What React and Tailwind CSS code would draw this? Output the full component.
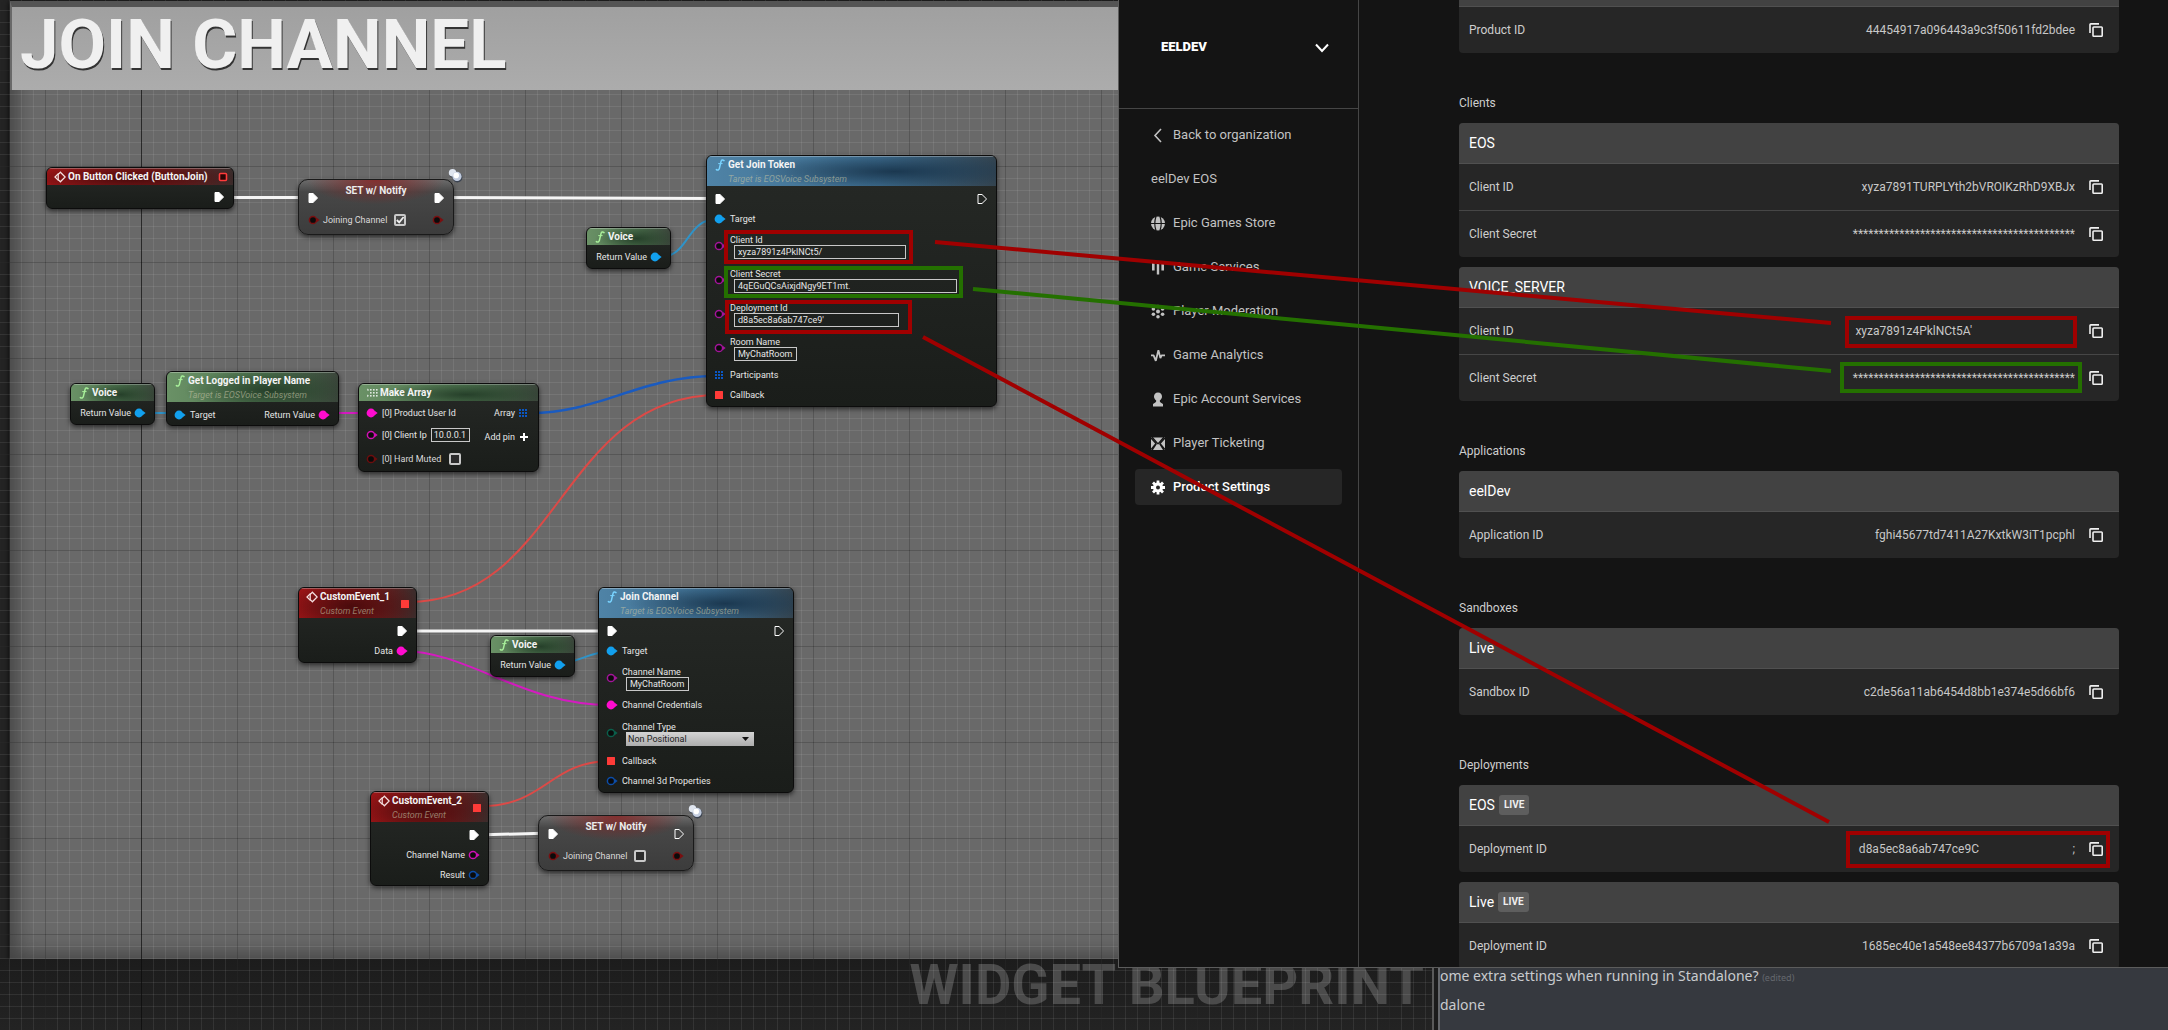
import React from "react";

/* ---------- pins and glyphs used on blueprint nodes ---------- */

function ExecPin({ hollow }) {
  return (
    <svg className="size-3 shrink-0" viewBox="0 0 12 12" aria-hidden="true">
      <path
        d="M2 1.5H6L10.6 6L6 10.5H2Z"
        fill={hollow ? "none" : "#fff"}
        stroke="#fff"
        strokeWidth="1"
        strokeLinejoin="round"
      />
    </svg>
  );
}

function DataPin({ color, hollow }) {
  return (
    <svg className="size-3 shrink-0" viewBox="0 0 12 12" aria-hidden="true">
      <path d="M9 4L11.6 6L9 8Z" fill={color} />
      {hollow ? (
        <circle cx="5" cy="6" r="3.6" fill="#0b0b0b" stroke={color} strokeWidth="1.5" />
      ) : (
        <circle cx="5" cy="6" r="4.4" fill={color} />
      )}
    </svg>
  );
}

function DelegatePin({ hollow }) {
  return (
    <svg className="size-3 shrink-0" viewBox="0 0 12 12" aria-hidden="true">
      {hollow ? (
        <rect x="2.5" y="2.5" width="7" height="7" rx="1" fill="#2a0505" stroke="#ff3b3b" strokeWidth="1.6" />
      ) : (
        <rect x="1" y="2" width="8" height="8" rx="0.5" fill="#ff3b38" />
      )}
    </svg>
  );
}

function ArrayPin() {
  return (
    <svg className="size-3 shrink-0" viewBox="0 0 12 12" aria-hidden="true" fill="#0b57c4">
      {[1, 4, 7].map((y) => [1, 4, 7].map((x) => <rect key={`${x}-${y}`} x={x} y={y + 1} width="2" height="2" />))}
    </svg>
  );
}

function FunctionIcon({ color }) {
  return (
    <svg className="h-3 w-3 shrink-0" viewBox="0 0 12 12" fill="none" stroke={color} strokeLinecap="round" aria-hidden="true">
      <path d="M10 1.6C8.6 .4 7.4 1 7 2.6L5.4 9.4C5 11 3.6 11.6 2.4 10.6" strokeWidth="1.5" />
      <path d="M4.6 4.6H8.2" strokeWidth="1" />
    </svg>
  );
}

function EventIcon() {
  return (
    <svg className="h-3 w-3 shrink-0" viewBox="0 0 12 12" fill="none" stroke="#f3dede" strokeWidth="1.3" aria-hidden="true">
      <path d="M4.6 2.4L1 6L4.6 9.6" />
      <path d="M6.4 1.2L11.2 6L6.4 10.8L4.2 8.6V3.4Z" />
    </svg>
  );
}

function MakeArrayIcon() {
  return (
    <svg className="h-3 w-3 shrink-0" viewBox="0 0 12 12" fill="#dfe8df" aria-hidden="true">
      <path d="M1 1.5L3.4 3L1.6 4ZM1 7.5L3 8.8L1.4 10.2Z" />
      {[2, 5, 8].map((y) => [4, 7, 10].map((x) => <rect key={`${x}-${y}`} x={x} y={y} width="1.6" height="1.6" />))}
    </svg>
  );
}

function NotifyIcon({ place }) {
  return (
    <svg className={`absolute h-4 w-4 ${place}`} viewBox="0 0 16 16" aria-hidden="true">
      <circle cx="6" cy="5.5" r="4" fill="#3b4350" />
      <circle cx="10.4" cy="9.4" r="5" fill="#3b4350" />
      <circle cx="5.6" cy="4.8" r="3.8" fill="#dfe5ef" />
      <circle cx="10" cy="8.4" r="4.6" fill="#c3cde0" />
      <circle cx="9.2" cy="7.4" r="2.8" fill="#fff" />
    </svg>
  );
}

/* ---------- node building blocks ---------- */

const HEADERS = {
  red: "bg-[radial-gradient(ellipse_60%_90%_at_45%_60%,#4a0b0c_0%,#4a0b0c00_100%),linear-gradient(to_right,#a01517,#7a1a1b_60%,#3a2c2b)]",
  green: "bg-[radial-gradient(ellipse_50%_80%_at_60%_60%,#26402a_0%,#26402a00_100%),linear-gradient(to_right,#6a9166,#4f7550_60%,#3b453b)]",
  blue: "bg-[radial-gradient(ellipse_50%_60%_at_65%_50%,#1b3850_0%,#1b385000_100%),linear-gradient(to_right,#4f83a6,#3d6c8e_60%,#33434f)]",
};

function Node({ place, tone, icon, title, subtitle, corner, children }) {
  return (
    <article
      className={`absolute overflow-hidden rounded-md border border-[#0c0c0c] bg-linear-to-b from-[#262926] to-[#1a1d1a] shadow-[0_2px_5px_#0009] ${place}`}
    >
      <header
        className={`flex justify-between border-t border-white/30 pr-1 pl-[7px] ${subtitle ? "h-[30px]" : "h-[17px]"} ${HEADERS[tone]}`}
      >
        <div className="flex gap-0.5 pt-[2px]">
          {icon}
          <div>
            <h3 className="text-[10px] leading-3 font-bold whitespace-nowrap text-[#f4f4f4]">{title}</h3>
            {subtitle && <p className="pt-[2px] text-[9px] leading-3 whitespace-nowrap text-[#c2c2a4] italic opacity-60">{subtitle}</p>}
          </div>
        </div>
        {corner && <div className="flex items-center">{corner}</div>}
      </header>
      <div className={subtitle ? "pt-[3px]" : "pt-[2px]"}>{children}</div>
    </article>
  );
}

function Row({ left, right, height = "h-5" }) {
  return (
    <div className={`flex items-center justify-between pr-2 pl-[7px] ${height}`}>
      <div className="flex items-center gap-1">{left}</div>
      <div className="flex items-center gap-[3px]">{right}</div>
    </div>
  );
}

function Label({ children }) {
  return <span className="text-[9px] leading-3 whitespace-nowrap text-[#e6e6e6]">{children}</span>;
}

function TextPin({ id, label, value, width }) {
  return (
    <div className="flex h-[34px] items-center gap-1 px-[7px]">
      <DataPin color="#a3149a" hollow />
      <div className="flex flex-col">
        <label htmlFor={id} className="pt-0.5 text-[9px] leading-[10px] text-[#e6e6e6]">
          {label}
        </label>
        <input
          id={id}
          type="text"
          defaultValue={value}
          className={`ml-1 h-3.5 border border-[#c8c8c8] bg-transparent px-[3px] text-[9px] leading-3 text-[#e6e6e6] ${width}`}
        />
      </div>
    </div>
  );
}

function CheckBox({ checked, label, id }) {
  return (
    <>
      <label htmlFor={id} className="text-[9px] leading-3 whitespace-nowrap text-[#dadada]">
        {label}
      </label>
      <span className="relative ml-1 flex size-3">
        <input
          id={id}
          type="checkbox"
          defaultChecked={checked}
          className="peer size-3 appearance-none rounded-xs border-2 border-[#c9c9c9] bg-[#2c2c2c] checked:bg-[#4a4a4a]"
        />
        <svg className="pointer-events-none absolute inset-0 hidden size-3 peer-checked:block" viewBox="0 0 12 12" fill="none" stroke="#eee" strokeWidth="1.8" aria-hidden="true">
          <path d="M2.8 6L5.2 8.4L9.6 3" />
        </svg>
      </span>
    </>
  );
}

function VoiceNode({ place }) {
  return (
    <Node place={`h-[42px] w-[85px] ${place}`} tone="green" icon={<FunctionIcon color="#a8f09a" />} title="Voice">
      <Row
        right={
          <>
            <Label>Return Value</Label>
            <DataPin color="#12a0ee" />
          </>
        }
      />
    </Node>
  );
}

function SetNotifyNode({ place, iconPlace, id, checked, connected }) {
  return (
    <>
      <article
        className={`absolute h-14 w-[156px] rounded-[10px] border border-[#1a1a1a] bg-[radial-gradient(ellipse_45%_45%_at_50%_0%,#8a2020cc_0%,#8a202000_100%),linear-gradient(to_bottom,#6b6b6b,#474747_22%,#3c3c3c)] shadow-[0_2px_5px_#0009] ${place}`}
      >
        <div className="flex h-7 items-end justify-between px-2">
          <span className="flex h-5 items-center">
            <ExecPin />
          </span>
          <h3 className="self-start pt-[5px] text-[10px] leading-3 font-bold text-[#ececec]">SET w/ Notify</h3>
          <span className="flex h-5 items-center">
            <ExecPin hollow={!connected} />
          </span>
        </div>
        <div className="flex h-6 items-center justify-between px-[9px]">
          <div className="flex items-center gap-[3px]">
            <DataPin color="#7a0f10" hollow />
            <CheckBox id={id} label="Joining Channel" checked={checked} />
          </div>
          <DataPin color="#7a0f10" hollow />
        </div>
      </article>
      <NotifyIcon place={iconPlace} />
    </>
  );
}

function Wires() {
  return (
    <svg className="pointer-events-none absolute inset-0 h-full w-full" fill="none" aria-hidden="true">
      <path d="M226 197.5H312M440 197.5L716 198.5M403 631H611M476 835L552 833" stroke="#f5f5f5" strokeWidth="3" />
      <g stroke="#2f93c8" strokeWidth="2">
        <path d="M660 257C690 257 685 219 718 219M144 413H180" />
        <path d="M552 665C575 665 590 651 612 651" />
      </g>
      <path d="M530 413C600 413 640 376 716 376" stroke="#1a5bc0" strokeWidth="2.5" />
      <path d="M326 413H372M401 651C470 651 520 705 611 705" stroke="#d41bc0" strokeWidth="2" />
      <g stroke="#dc4a47" strokeWidth="2">
        <path d="M408 602C560 602 560 395 719 395" />
        <path d="M482 806C545 806 550 761 611 761" />
      </g>
    </svg>
  );
}

function BlueprintEditor() {
  return (
    <section className="relative flex w-[1434px] shrink-0 flex-col overflow-hidden border-r-2 border-[#5a5a5a] bg-[#242424] font-[Roboto,sans-serif]">
      <div className="ml-2.5 flex-1 border-t border-[#1b1b1b] bg-[#696969] shadow-[inset_10px_0_16px_#0003,inset_0_-10px_20px_#0003,0_2px_6px_#000]" />
      <footer className="h-[71px] bg-linear-to-b from-[#1c1c1c] to-[#232323] pr-2 text-right text-[56px] leading-[52px] font-bold text-[#4b4b4b]">
        WIDGET BLUEPRINT
      </footer>

      <div className="pointer-events-none absolute inset-0 bg-[linear-gradient(to_right,#0008_1px,transparent_1px),linear-gradient(to_right,#0004_1px,transparent_1px),linear-gradient(to_bottom,#0004_1px,transparent_1px),linear-gradient(to_right,#ffffff14_1px,transparent_1px),linear-gradient(to_bottom,#ffffff14_1px,transparent_1px)] [background-position:141px_0,45px_0,0_70px,9px_0,0_10px] [background-size:1536px_768px,96px_96px,96px_96px,12px_12px,12px_12px]" />
      <div className="absolute top-px right-0 left-2.5 border-t-[6px] border-l-2 border-t-[#545454] border-l-[#696969]">
        <h2 className="h-[83px] bg-linear-to-b from-[#a0a0a0] to-[#acacac] pl-2 text-[69px] leading-[76px] font-bold whitespace-nowrap text-[#f0f0f0] [text-shadow:1px_2px_0_#333]">
          JOIN CHANNEL
        </h2>
      </div>

      <Wires />

      <Node
        place="left-[46px] top-[167px] h-[42px] w-[188px]"
        tone="red"
        icon={<EventIcon />}
        title="On Button Clicked (ButtonJoin)"
        corner={<DelegatePin hollow />}
      >
        <Row right={<ExecPin />} />
      </Node>
      <SetNotifyNode place="left-[298px] top-[179px]" iconPlace="left-[447px] top-[168px]" id="join-set" checked connected />
      <VoiceNode place="left-[586px] top-[227px]" />

      <Node
        place="left-[706px] top-[155px] h-[252px] w-[291px]"
        tone="blue"
        icon={<FunctionIcon color="#79d3ff" />}
        title="Get Join Token"
        subtitle="Target is EOSVoice Subsystem"
      >
        <Row left={<ExecPin />} right={<ExecPin hollow />} />
        <Row
          left={
            <>
              <DataPin color="#12a0ee" />
              <Label>Target</Label>
            </>
          }
        />
        <TextPin id="client-id" label="Client Id" value="xyza7891z4PklNCt5/" width="w-[172px]" />
        <TextPin id="client-secret" label="Client Secret" value="4qEGuQCsAixjdNgy9ET1mt." width="w-[223px]" />
        <TextPin id="deployment-id" label="Deployment Id" value="d8a5ec8a6ab747ce9'" width="w-[165px]" />
        <TextPin id="room-name" label="Room Name" value="MyChatRoom" width="w-[63px]" />
        <Row
          left={
            <>
              <ArrayPin />
              <Label>Participants</Label>
            </>
          }
        />
        <Row
          left={
            <>
              <DelegatePin />
              <Label>Callback</Label>
            </>
          }
        />
      </Node>

      <VoiceNode place="left-[70px] top-[383px]" />
      <Node
        place="left-[166px] top-[371px] h-[55px] w-[173px]"
        tone="green"
        icon={<FunctionIcon color="#a8f09a" />}
        title="Get Logged in Player Name"
        subtitle="Target is EOSVoice Subsystem"
      >
        <Row
          left={
            <>
              <DataPin color="#12a0ee" />
              <Label>Target</Label>
            </>
          }
          right={
            <>
              <Label>Return Value</Label>
              <DataPin color="#ff0ccf" />
            </>
          }
        />
      </Node>
      <Node place="left-[358px] top-[383px] h-[89px] w-[181px]" tone="green" icon={<MakeArrayIcon />} title="Make Array">
        <Row
          left={
            <>
              <DataPin color="#ff0ccf" />
              <Label>[0] Product User Id</Label>
            </>
          }
          right={
            <>
              <Label>Array</Label>
              <ArrayPin />
            </>
          }
        />
        <Row
          height="h-6"
          left={
            <>
              <DataPin color="#d10fb5" hollow />
              <label htmlFor="client-ip" className="text-[9px] leading-3 text-[#e6e6e6]">
                [0] Client Ip
              </label>
              <input
                id="client-ip"
                type="text"
                defaultValue="10.0.0.1"
                className="h-3.5 w-[39px] border border-[#c8c8c8] bg-transparent px-[2px] text-[9px] leading-3 text-[#e6e6e6]"
              />
            </>
          }
          right={
            <button type="button" className="flex items-center gap-[3px] pt-1">
              <Label>Add pin</Label>
              <svg className="size-3" viewBox="0 0 12 12" fill="none" stroke="#fff" strokeWidth="2" aria-hidden="true">
                <path d="M6 2V10M2 6H10" />
              </svg>
            </button>
          }
        />
        <Row
          height="h-6"
          left={
            <>
              <DataPin color="#6d0d0d" hollow />
              <CheckBox id="hard-muted" label="[0] Hard Muted" />
            </>
          }
        />
      </Node>

      <Node
        place="left-[298px] top-[587px] h-[76px] w-[119px]"
        tone="red"
        icon={<EventIcon />}
        title="CustomEvent_1"
        subtitle="Custom Event"
        corner={<DelegatePin />}
      >
        <Row right={<ExecPin />} />
        <Row
          right={
            <>
              <Label>Data</Label>
              <DataPin color="#ff0ccf" />
            </>
          }
        />
      </Node>
      <VoiceNode place="left-[490px] top-[635px]" />
      <Node
        place="left-[598px] top-[587px] h-[206px] w-[196px]"
        tone="blue"
        icon={<FunctionIcon color="#79d3ff" />}
        title="Join Channel"
        subtitle="Target is EOSVoice Subsystem"
      >
        <Row left={<ExecPin />} right={<ExecPin hollow />} />
        <Row
          left={
            <>
              <DataPin color="#12a0ee" />
              <Label>Target</Label>
            </>
          }
        />
        <TextPin id="channel-name" label="Channel Name" value="MyChatRoom" width="w-[63px]" />
        <Row
          left={
            <>
              <DataPin color="#ff0ccf" />
              <Label>Channel Credentials</Label>
            </>
          }
        />
        <div className="flex h-9 items-center gap-1 px-[7px]">
          <DataPin color="#0a5f4b" hollow />
          <div className="flex flex-col">
            <label htmlFor="channel-type" className="pt-0.5 text-[9px] leading-[10px] text-[#e6e6e6]">
              Channel Type
            </label>
            <span className="relative ml-1 flex">
              <select
                id="channel-type"
                className="h-3.5 w-32 appearance-none bg-linear-to-b from-[#d4d4d4] to-[#adadad] px-[2px] text-[9px] leading-3 text-[#1c1c1c]"
              >
                <option>Non Positional</option>
              </select>
              <svg className="pointer-events-none absolute top-[5px] right-[5px] h-1 w-[7px]" viewBox="0 0 7 4" fill="#111" aria-hidden="true">
                <path d="M0 0H7L3.5 4Z" />
              </svg>
            </span>
          </div>
        </div>
        <Row
          left={
            <>
              <DelegatePin />
              <Label>Callback</Label>
            </>
          }
        />
        <Row
          left={
            <>
              <DataPin color="#0c4da8" hollow />
              <Label>Channel 3d Properties</Label>
            </>
          }
        />
      </Node>

      <Node
        place="left-[370px] top-[791px] h-[95px] w-[119px]"
        tone="red"
        icon={<EventIcon />}
        title="CustomEvent_2"
        subtitle="Custom Event"
        corner={<DelegatePin />}
      >
        <Row right={<ExecPin />} />
        <Row
          right={
            <>
              <Label>Channel Name</Label>
              <DataPin color="#d10fb5" hollow />
            </>
          }
        />
        <Row
          right={
            <>
              <Label>Result</Label>
              <DataPin color="#0c4da8" hollow />
            </>
          }
        />
      </Node>
      <SetNotifyNode place="left-[538px] top-[815px]" iconPlace="left-[687px] top-[804px]" id="join-clear" />
    </section>
  );
}

/* ---------- developer portal ---------- */

const NAV = [
  {
    label: "Back to organization",
    icon: <path d="M10 1L4 7.5L10 14" fill="none" stroke="currentColor" strokeWidth="1.6" />,
  },
  { label: "eelDev EOS" },
  {
    label: "Epic Games Store",
    icon: (
      <g fill="currentColor">
        <circle cx="7" cy="7.5" r="7" />
        <path d="M0 7.5H14M5 .5C3.6 4.5 3.6 10.5 5 14.5M9 .5C10.4 4.5 10.4 10.5 9 14.5" fill="none" stroke="#141414" strokeWidth="1.2" />
      </g>
    ),
  },
  { label: "Game Services", icon: <path d="M1 3H3.6V10.5H1ZM5.8 1H8.2V14.5H5.8ZM10.4 3H13V10.5H10.4Z" fill="currentColor" /> },
  {
    label: "Player Moderation",
    icon: (
      <g fill="currentColor">
        <circle cx="7" cy="7.5" r="2" />
        <circle cx="7" cy="2.5" r="1.8" />
        <circle cx="7" cy="12.7" r="1.8" />
        <circle cx="2.4" cy="4.9" r="1.8" />
        <circle cx="11.6" cy="4.9" r="1.8" />
        <circle cx="2.4" cy="10.3" r="1.8" />
        <circle cx="11.6" cy="10.3" r="1.8" />
      </g>
    ),
  },
  {
    label: "Game Analytics",
    icon: <path d="M0 7.4H2.6L4.8 12.8L7.4 2.2L9.4 10L10.6 7.4H14" fill="none" stroke="currentColor" strokeWidth="1.8" strokeLinejoin="bevel" />,
  },
  {
    label: "Epic Account Services",
    icon: <path d="M7 .5C9.6 .5 11 2.3 11 4.7C11 6.2 10 7.2 8.8 8.6C8.6 10.2 9.4 10.8 12 12V14.5H2V12C4.6 10.8 5.4 10.2 5.2 8.6C4 7.2 3 6.2 3 4.7C3 2.3 4.4 .5 7 .5Z" fill="currentColor" />,
  },
  {
    label: "Player Ticketing",
    icon: (
      <g fill="currentColor">
        <rect x="0" y="1.5" width="14" height="12.5" />
        <path d="M0 2L5 7.5L0 13.4M14 2L9 7.5L14 13.4M1 1L7 7.8L13 1M1 14.4L5.4 7.6M13 14.4L8.6 7.6" fill="none" stroke="#141414" strokeWidth="1.2" />
      </g>
    ),
  },
  {
    label: "Product Settings",
    active: true,
    icon: (
      <g>
        <path d="M7 .5V14.5M0 7.5H14M2 2.5L12 12.5M12 2.5L2 12.5" stroke="currentColor" strokeWidth="2.8" />
        <circle cx="7" cy="7.5" r="5" fill="currentColor" />
        <circle cx="7" cy="7.5" r="2" fill="#262626" />
      </g>
    ),
  },
];

function Sidebar() {
  return (
    <aside className="w-60 shrink-0 border-r border-[#464646]">
      <button type="button" className="flex h-[109px] w-full items-start justify-between border-b border-[#464646] pt-[39px] pr-[29px] pl-[42px]">
        <span className="text-[13px] leading-4 font-black text-white">EELDEV</span>
        <svg className="mt-[3px] h-3 w-3.5" viewBox="0 0 14 12" fill="none" stroke="#fff" strokeWidth="2" aria-hidden="true">
          <path d="M1 2.5L7 9L13 2.5" />
        </svg>
      </button>
      <nav className="flex flex-col gap-2 px-4 pt-2">
        {NAV.map((item) => (
          <a
            key={item.label}
            href="#"
            className={`flex h-9 items-center gap-2 rounded px-4 text-[13px] leading-4 ${
              item.active ? "bg-[#262626] font-medium text-white" : "text-[#c2c2c2]"
            }`}
          >
            {item.icon && (
              <svg className="h-[15px] w-3.5 shrink-0" viewBox="0 0 14 15" aria-hidden="true">
                {item.icon}
              </svg>
            )}
            {item.label}
          </a>
        ))}
      </nav>
    </aside>
  );
}

function CopyButton({ name }) {
  return (
    <button type="button" aria-label={`Copy ${name}`}>
      <svg className="size-3.5" viewBox="0 0 14 14" fill="none" stroke="#f0f0f0" strokeWidth="1.6" aria-hidden="true">
        <path d="M1 10V1.6Q1 .9 1.8 .9H10" />
        <rect x="4" y="4" width="9.2" height="9.2" rx="0.8" />
      </svg>
    </button>
  );
}

function CardRows({ rows }) {
  return (
    <dl>
      {rows.map(([label, value, tail]) => (
        <div key={label} className="flex h-[47px] items-center border-t border-[#464646] pr-4 pl-2.5 text-xs leading-4 first:h-[46px] first:border-t-0">
          <dt className="flex-1 text-[#cecece]">{label}</dt>
          <dd className="flex items-center gap-3.5 text-[#c8c8c8]">
            <span className="flex justify-between">
              <span>{value}</span>
              {tail}
            </span>
            <CopyButton name={label} />
          </dd>
        </div>
      ))}
    </dl>
  );
}

function Card({ title, badge, rows }) {
  return (
    <article className="overflow-hidden rounded bg-[#262626]">
      <header className="flex h-[41px] items-center gap-1 border-b border-[#505050] bg-[#424242] px-2.5">
        <h3 className="text-sm leading-5 text-white">{title}</h3>
        {badge && <span className="rounded-[3px] bg-[#5e5e5e] px-[5px] text-[10px] leading-5 font-bold text-[#efefef]">{badge}</span>}
      </header>
      <CardRows rows={rows} />
    </article>
  );
}

const SECRET = "*".repeat(43);

const SECTIONS = [
  {
    heading: "Clients",
    cards: [
      { title: "EOS", rows: [["Client ID", "xyza7891TURPLYth2bVROIKzRhD9XBJx"], ["Client Secret", SECRET]] },
      {
        title: "VOICE_SERVER",
        rows: [["Client ID", "xyza7891z4PklNCt5A'", <span key="gap" className="w-[103px]" />], ["Client Secret", SECRET]],
      },
    ],
  },
  { heading: "Applications", cards: [{ title: "eelDev", rows: [["Application ID", "fghi45677td7411A27KxtkW3iT1pcphl"]] }] },
  { heading: "Sandboxes", cards: [{ title: "Live", rows: [["Sandbox ID", "c2de56a11ab6454d8bb1e374e5d66bf6"]] }] },
  {
    heading: "Deployments",
    cards: [
      {
        title: "EOS",
        badge: "LIVE",
        rows: [["Deployment ID", "d8a5ec8a6ab747ce9C", <span key="gap" className="w-24 text-right">;</span>]],
      },
      { title: "Live", badge: "LIVE", rows: [["Deployment ID", "1685ec40e1a548ee84377b6709a1a39a"]] },
    ],
  },
];

function Portal() {
  return (
    <section className="absolute top-0 right-0 bottom-[62px] left-[1118px] flex overflow-hidden border-b border-l border-[#5c5c5c] bg-[#141414] font-[Roboto,sans-serif]">
      <Sidebar />
      <main className="flex flex-1 flex-col overflow-hidden pr-[49px] pl-[100px]">
        <article className="shrink-0 overflow-hidden rounded-b bg-[#262626]">
          <div className="h-[7px] border-b border-[#505050] bg-[#424242]" />
          <CardRows rows={[["Product ID", "44454917a096443a9c3f50611fd2bdee"]]} />
        </article>
        {SECTIONS.map((section) => (
          <section key={section.heading} className="shrink-0 pt-10">
            <h2 className="pb-2.5 text-xs leading-5 text-[#cecece]">{section.heading}</h2>
            <div className="flex flex-col gap-2.5">
              {section.cards.map((card) => (
                <Card key={card.title} {...card} />
              ))}
            </div>
          </section>
        ))}
      </main>
    </section>
  );
}

/* ---------- chat strip and annotations ---------- */

function ChatStrip() {
  return (
    <section className="ml-1 flex flex-1 flex-col justify-end overflow-hidden border-l-2 border-[#66686c] bg-[#36393f] font-['Noto_Sans','Open_Sans',sans-serif] text-sm leading-[27px] whitespace-nowrap text-[#c9cbce]">
      <p>
        ome extra settings when running in Standalone? <span className="text-[9px] text-[#65686e]">(edited)</span>
      </p>
      <p className="pb-3">dalone</p>
    </section>
  );
}

function Annotations() {
  return (
    <svg className="pointer-events-none absolute inset-0 h-full w-full" fill="none" strokeWidth="4" aria-hidden="true">
      <g stroke="#a00000">
        <rect x="726" y="232" width="185" height="30" />
        <rect x="727" y="302" width="183" height="30" />
        <rect x="1847" y="318" width="228" height="28" />
        <rect x="1848" y="833" width="260" height="33" />
        <path d="M935 242L1831 323M923 337L1829 822" />
      </g>
      <g stroke="#247000">
        <rect x="726" y="268" width="235" height="28" />
        <rect x="1842" y="364" width="238" height="27" />
        <path d="M973 289L1831 371" />
      </g>
    </svg>
  );
}

export default function App() {
  return (
    <div className="relative flex h-screen overflow-hidden bg-[#1b1b1b]">
      <BlueprintEditor />
      <ChatStrip />
      <Portal />
      <Annotations />
    </div>
  );
}
